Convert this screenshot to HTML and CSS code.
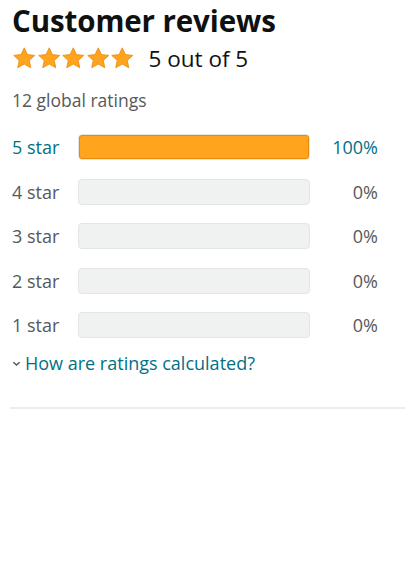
FILE: index.html
```html
<!DOCTYPE html>
<html lang="en">
<head>
  <meta charset="UTF-8">
  <meta name="viewport" content="width=device-width, initial-scale=1.0">
  <title>Customer reviews</title>
  <link rel="stylesheet" href="styles.css">
</head>
<body>
  <div class="reviews">
    <h2 class="title">Customer reviews</h2>

    <div class="summary">
      <div class="stars">
        <svg viewBox="0 0 24 24"><path d="M12 1.8l3.1 6.6 7.2.8-5.4 5 1.5 7.1L12 17.7l-6.4 3.6 1.5-7.1-5.4-5 7.2-.8z"/></svg>
        <svg viewBox="0 0 24 24"><path d="M12 1.8l3.1 6.6 7.2.8-5.4 5 1.5 7.1L12 17.7l-6.4 3.6 1.5-7.1-5.4-5 7.2-.8z"/></svg>
        <svg viewBox="0 0 24 24"><path d="M12 1.8l3.1 6.6 7.2.8-5.4 5 1.5 7.1L12 17.7l-6.4 3.6 1.5-7.1-5.4-5 7.2-.8z"/></svg>
        <svg viewBox="0 0 24 24"><path d="M12 1.8l3.1 6.6 7.2.8-5.4 5 1.5 7.1L12 17.7l-6.4 3.6 1.5-7.1-5.4-5 7.2-.8z"/></svg>
        <svg viewBox="0 0 24 24"><path d="M12 1.8l3.1 6.6 7.2.8-5.4 5 1.5 7.1L12 17.7l-6.4 3.6 1.5-7.1-5.4-5 7.2-.8z"/></svg>
      </div>
      <span class="score">5 out of 5</span>
    </div>

    <p class="count">12 global ratings</p>

    <!-- histogram -->
    <div class="histogram">
      <div class="row active">
        <span class="label">5 star</span>
        <div class="meter"><div class="fill" style="width: 100%"></div></div>
        <span class="pct">100%</span>
      </div>
      <div class="row">
        <span class="label">4 star</span>
        <div class="meter"></div>
        <span class="pct">0%</span>
      </div>
      <div class="row">
        <span class="label">3 star</span>
        <div class="meter"></div>
        <span class="pct">0%</span>
      </div>
      <div class="row">
        <span class="label">2 star</span>
        <div class="meter"></div>
        <span class="pct">0%</span>
      </div>
      <div class="row">
        <span class="label">1 star</span>
        <div class="meter"></div>
        <span class="pct">0%</span>
      </div>
    </div>

    <a class="how" href="#">
      <svg viewBox="0 0 10 10"><path d="M1.5 3.5L5 6.8 8.5 3.5"/></svg>
      How are ratings calculated?
    </a>
  </div>

  <hr class="divider">
</body>
</html>
```

FILE: styles.css
```css
body {
  font-family: "Open Sans", "Noto Sans", Arial, sans-serif;
  margin: 0;
  padding: 0;
  background: #fff;
  color: #0f1111;
}

.reviews {
  padding: 0 12px;
}

.title {
  font-size: 29.5px;
  font-weight: 700;
  line-height: 38px;
  margin: 2px 0 0;
  letter-spacing: -0.1px;
}

.summary {
  display: flex;
  align-items: center;
  height: 30px;
  margin-top: 3px;
}

.stars {
  display: flex;
  gap: 0;
}

.stars svg {
  width: 24.5px;
  height: 24.5px;
  fill: #ffa41c;
  stroke: #e88b0c;
  stroke-width: 0.8;
  stroke-linejoin: round;
}

.score {
  font-size: 22.5px;
  margin-left: 14px;
  color: #0f1111;
}

.count {
  font-size: 17.5px;
  color: #565959;
  margin: 16px 0 0;
  line-height: 22px;
}

.histogram {
  margin-top: 23px;
  display: flex;
  flex-direction: column;
  gap: 18.5px;
}

.row {
  display: flex;
  align-items: center;
  height: 26px;
  font-size: 18px;
  color: #565959;
}

.row .label {
  width: 66px;
}

.row.active .label,
.row.active .pct {
  color: #007185;
}

.meter {
  width: 230px;
  height: 24px;
  background: #f0f2f2;
  border: 1px solid #e3e6e6;
  border-radius: 4px;
  overflow: hidden;
}

.fill {
  height: 100%;
  background: #ffa41c;
  box-shadow: inset 0 0 0 1px #e88b0c;
  border-radius: 3px;
}

.pct {
  width: 68px;
  text-align: right;
}

.how {
  display: flex;
  align-items: center;
  margin-top: 13px;
  font-size: 18px;
  line-height: 24px;
  color: #007185;
  text-decoration: none;
}

.how svg {
  width: 9px;
  height: 9px;
  margin-right: 4px;
  fill: none;
  stroke: #565959;
  stroke-width: 1.6;
}

.divider {
  margin: 32px 4px 0 10px;
  border: none;
  border-top: 2px solid #ececec;
}
```
